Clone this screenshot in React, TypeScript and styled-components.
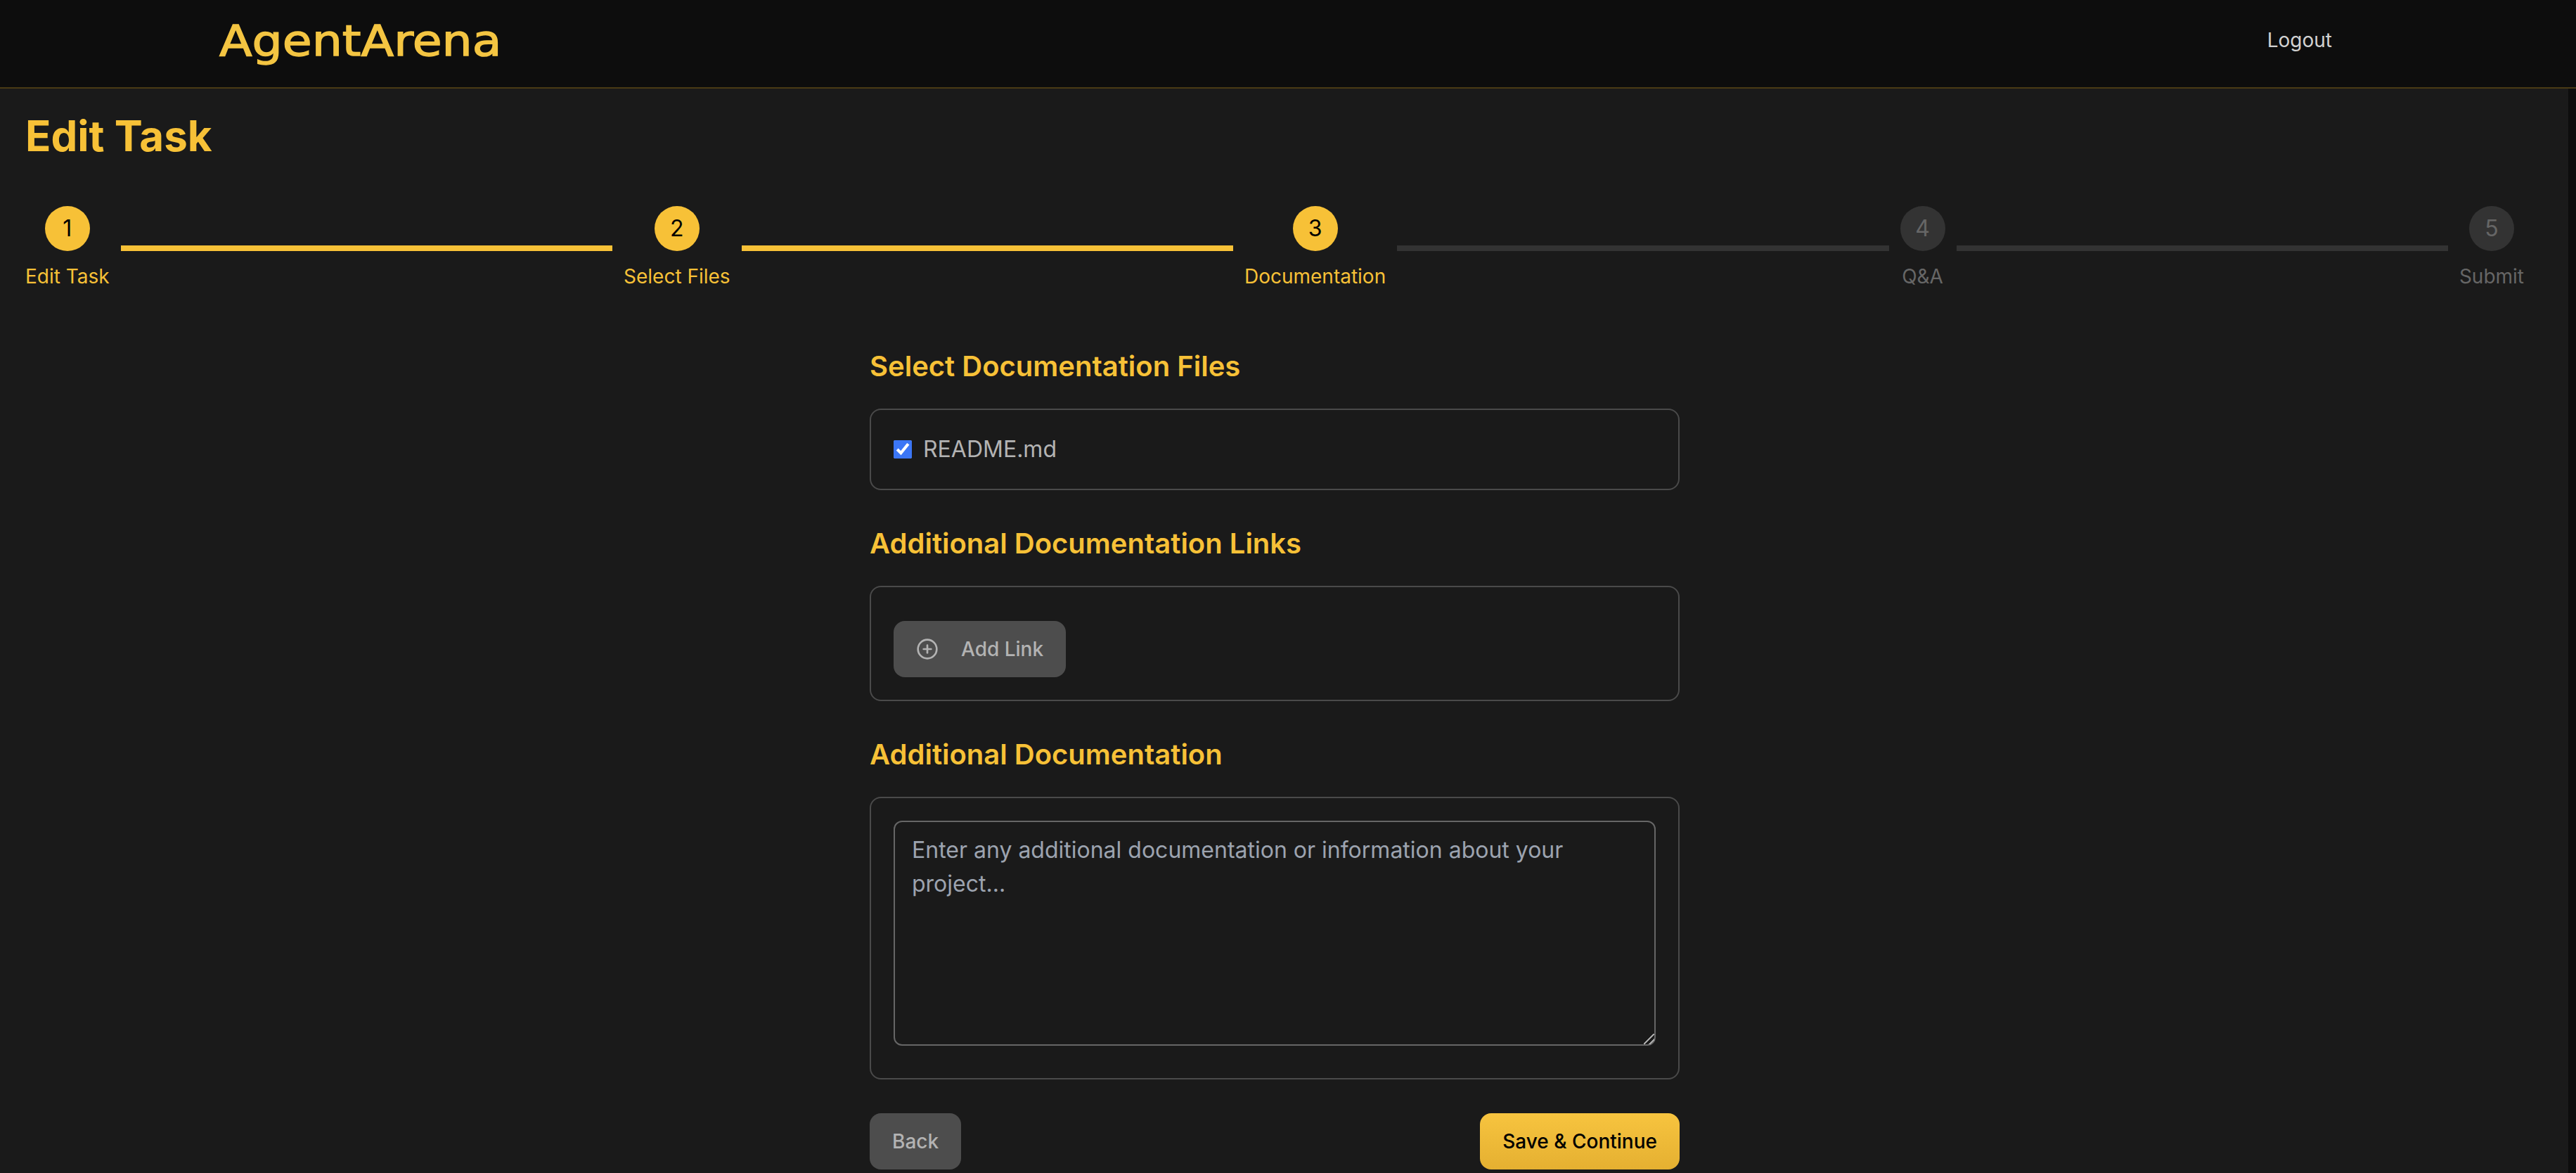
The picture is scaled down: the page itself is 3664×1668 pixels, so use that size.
import { Fragment } from 'react'
import styled, { createGlobalStyle } from 'styled-components'
import { CirclePlus } from 'lucide-react'

const GlobalStyle = createGlobalStyle`
  html, body {
    margin: 0;
    padding: 0;
    height: 100%;
    overflow: hidden;
    background: #1a1a1a;
    font-family: Inter, "Liberation Sans", sans-serif;
  }
  * {
    box-sizing: border-box;
  }
`

const Shell = styled.div`
  display: flex;
  flex-direction: column;
  height: 100vh;
`

const TopBar = styled.header`
  flex: none;
  height: 126px;
  display: flex;
  align-items: center;
  justify-content: space-between;
  padding: 0 347px 8px 312px;
  background: #0d0d0d;
  border-bottom: 2px solid #4a3a15;
`

const Logo = styled.div`
  font-family: "DejaVu Sans", sans-serif;
  font-size: 60px;
  line-height: 72px;
  color: #f4c542;
  transform: scaleX(1.135);
  transform-origin: left center;
  -webkit-text-stroke: 1.4px #f4c542;
`

const LogoutLink = styled.a`
  margin-bottom: 2px;
  font-size: 28px;
  line-height: 40px;
  color: #d1d1d1;
`

const Body = styled.div`
  flex: 1;
  min-height: 0;
  display: flex;
`

const Main = styled.main`
  flex: 1;
  min-width: 0;
  overflow: hidden;
  padding: 31px 63px 0 36px;
`

const ScrollTrack = styled.div`
  flex: none;
  width: 11px;
  background: #0d0d0d;
`

const PageTitle = styled.h1`
  margin: 0 0 64px;
  font-size: 60px;
  line-height: 72px;
  font-weight: 700;
  color: #f7c137;
`

const Stepper = styled.div`
  display: flex;
  align-items: center;
  gap: 16px;
  margin-bottom: 80px;
`

const Step = styled.div`
  flex: none;
  min-width: 64px;
  display: flex;
  flex-direction: column;
  align-items: center;
`

const StepCircle = styled.div<{ $active?: boolean }>`
  width: 64px;
  height: 64px;
  padding-bottom: 2px;
  border-radius: 50%;
  display: flex;
  align-items: center;
  justify-content: center;
  font-size: 32px;
  background: ${(p) => (p.$active ? '#f7c137' : '#333333')};
  color: ${(p) => (p.$active ? '#000000' : '#666666')};
`

const StepLabel = styled.div<{ $active?: boolean }>`
  margin-top: 16px;
  font-size: 28px;
  line-height: 40px;
  white-space: nowrap;
  color: ${(p) => (p.$active ? '#f7c137' : '#666666')};
`

const Connector = styled.div<{ $active?: boolean }>`
  flex: 1;
  height: 8px;
  background: ${(p) => (p.$active ? '#f7c137' : '#333333')};
`

const Form = styled.form`
  width: 1152px;
  margin: 0 auto;
`

const SectionTitle = styled.h2`
  margin: 0 0 32px;
  font-size: 40px;
  line-height: 56px;
  font-weight: 600;
  color: #f7c137;
`

const Panel = styled.div`
  margin-bottom: 48px;
  padding: 32px;
  border: 2px solid #4a4a4a;
  border-radius: 16px;
`

const CheckRow = styled.label`
  display: flex;
  align-items: center;
  gap: 16px;
  font-size: 32px;
  line-height: 48px;
  color: #b3b3b3;
`

const Checkbox = styled.input`
  width: 26px;
  height: 26px;
  margin: 0;
  accent-color: #3b76f6;
`

const AddLinkButton = styled.button`
  display: flex;
  align-items: center;
  gap: 32px;
  height: 80px;
  margin-top: 16px;
  padding: 0 32px;
  border: 0;
  border-radius: 16px;
  background: #4d4d4d;
  color: #b3b3b3;
  font-family: inherit;
  font-size: 28px;
  font-weight: 500;
`

const NotesArea = styled.textarea`
  display: block;
  width: 100%;
  height: 320px;
  margin-bottom: 14px;
  padding: 16px 24px;
  border: 2px solid #666666;
  border-radius: 12px;
  background: transparent;
  color: #b3b3b3;
  color-scheme: dark;
  font-family: inherit;
  font-size: 32px;
  line-height: 48px;
  resize: vertical;

  &::placeholder {
    color: #9ca3af;
    opacity: 1;
  }

  /* the stock grip doesn't show up on this dark field */
  &::-webkit-resizer {
    background: linear-gradient(
      135deg,
      transparent 0 44%,
      #a8a8a8 44% 54%,
      transparent 54% 72%,
      #a8a8a8 72% 82%,
      transparent 82%
    );
  }
`

const Actions = styled.div`
  display: flex;
  justify-content: space-between;
`

const ActionButton = styled.button<{ $primary?: boolean }>`
  height: 80px;
  padding: 0 32px;
  border: 0;
  border-radius: 16px;
  font-family: inherit;
  font-size: 28px;
  font-weight: 500;
  background: ${(p) => (p.$primary ? 'linear-gradient(180deg, #f7c43f 0%, #e5b031 100%)' : '#4d4d4d')};
  color: ${(p) => (p.$primary ? '#000000' : '#b3b3b3')};
`

const steps = ['Edit Task', 'Select Files', 'Documentation', 'Q&A', 'Submit']
const currentStep = 2

const App = () => {
  return (
    <Shell>
      <GlobalStyle />
      <TopBar>
        <Logo>AgentArena</Logo>
        <LogoutLink>Logout</LogoutLink>
      </TopBar>
      <Body>
        <Main>
          <PageTitle>Edit Task</PageTitle>
          <Stepper>
            {steps.map((label, i) => (
              <Fragment key={label}>
                <Step>
                  <StepCircle $active={i <= currentStep}>{i + 1}</StepCircle>
                  <StepLabel $active={i <= currentStep}>{label}</StepLabel>
                </Step>
                {i < steps.length - 1 && <Connector $active={i < currentStep} />}
              </Fragment>
            ))}
          </Stepper>
          <Form>
            <SectionTitle>Select Documentation Files</SectionTitle>
            <Panel>
              <CheckRow>
                <Checkbox type='checkbox' defaultChecked />
                README.md
              </CheckRow>
            </Panel>
            <SectionTitle>Additional Documentation Links</SectionTitle>
            <Panel>
              <AddLinkButton type='button'>
                <CirclePlus size={32} />
                Add Link
              </AddLinkButton>
            </Panel>
            <SectionTitle>Additional Documentation</SectionTitle>
            <Panel>
              <NotesArea placeholder='Enter any additional documentation or information about your project...' />
            </Panel>
            <Actions>
              <ActionButton type='button'>Back</ActionButton>
              <ActionButton type='button' $primary>
                Save &amp; Continue
              </ActionButton>
            </Actions>
          </Form>
        </Main>
        <ScrollTrack />
      </Body>
    </Shell>
  )
}

export default App
